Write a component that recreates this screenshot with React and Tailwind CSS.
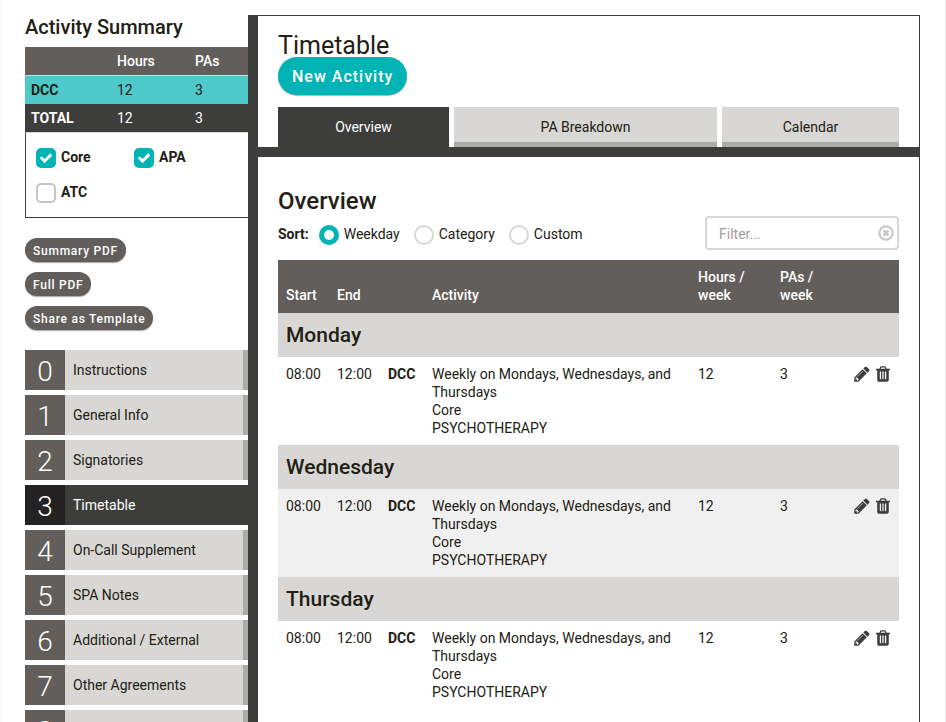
import React, { useState } from "react";

function Glyph({ d, className }) {
  return (
    <svg viewBox="0 0 1792 1792" fill="currentColor" aria-hidden="true" className={className}>
      <path d={d} />
    </svg>
  );
}

const CHECK =
  "M1671 566q0 40-28 68l-724 724-136 136q-28 28-68 28t-68-28l-136-136-362-362q-28-28-28-68t28-68l136-136q28-28 68-28t68 28l294 295 656-657q28-28 68-28t68 28l136 136q28 28 28 68z";
const PENCIL =
  "M491 1536l91-91-235-235-91 91v107h128v128h107zm523-928q0-22-22-22-10 0-17 7l-542 542q-7 7-7 17 0 22 22 22 10 0 17-7l542-542q7-7 7-17zm-54-192l416 416-832 832h-416v-416zm683 96q0 53-37 90l-166 166-416-416 166-165q36-38 90-38 53 0 91 38l235 234q37 39 37 91z";
const TRASH =
  "M704 1376v-704q0-14-9-23t-23-9h-64q-14 0-23 9t-9 23v704q0 14 9 23t23 9h64q14 0 23-9t9-23zm256 0v-704q0-14-9-23t-23-9h-64q-14 0-23 9t-9 23v704q0 14 9 23t23 9h64q14 0 23-9t9-23zm256 0v-704q0-14-9-23t-23-9h-64q-14 0-23 9t-9 23v704q0 14 9 23t23 9h64q14 0 23-9t9-23zm-544-992h448l-48-117q-7-9-17-11h-317q-10 2-17 11zm928 32v64q0 14-9 23t-23 9h-96v948q0 83-47 143.5t-113 60.5h-832q-66 0-113-58.5t-47-141.5v-952h-96q-14 0-23-9t-9-23v-64q0-14 9-23t23-9h309l70-167q15-37 54-63t79-26h320q40 0 79 26t54 63l70 167h309q14 0 23 9t9 23z";
const CLEAR =
  "M1225 1079l-146 146q-10 10-23 10t-23-10l-137-137-137 137q-10 10-23 10t-23-10l-146-146q-10-10-10-23t10-23l137-137-137-137q-10-10-10-23t10-23l146-146q10-10 23-10t23 10l137 137 137-137q10-10 23-10t23 10l146 146q10 10 10 23t-10 23l-137 137 137 137q10 10 10 23t-10 23zm215-183q0-148-73-273t-198-198-273-73-273 73-198 198-73 273 73 273 198 198 273 73 273-73 198-198 73-273zm224 0q0 209-103 385.5t-279.5 279.5-385.5 103-385.5-103-279.5-279.5-103-385.5 103-385.5 279.5-279.5 385.5-103 385.5 103 279.5 279.5 103 385.5z";

const NAV = [
  "Instructions",
  "General Info",
  "Signatories",
  "Timetable",
  "On-Call Supplement",
  "SPA Notes",
  "Additional / External",
  "Other Agreements",
  "",
];

const DAYS = ["Monday", "Wednesday", "Thursday"];

function CheckField({ label, initial }) {
  const [on, setOn] = useState(initial);
  return (
    <label className="flex h-5 items-start gap-[5px] font-bold">
      <span className="grid size-5 place-items-center">
        <input
          type="checkbox"
          checked={on}
          onChange={(e) => setOn(e.target.checked)}
          className="col-start-1 row-start-1 size-5 appearance-none rounded-[5px] border-2 border-[#c8c4c1] bg-white checked:border-[#00b3b4] checked:bg-[#00b3b4]"
        />
        {on && (
          <Glyph d={CHECK} className="pointer-events-none col-start-1 row-start-1 size-[14px] text-white" />
        )}
      </span>
      {label}
    </label>
  );
}

function Pill({ children }) {
  return (
    <button
      type="button"
      className="h-6 rounded-full bg-[#625e5b] px-2 pt-[2px] text-xs font-medium tracking-[0.0625em] text-white shadow-[0_1px_1px_rgba(0,0,0,0.35)]"
    >
      {children}
    </button>
  );
}

function Summary() {
  return (
    <section>
      <h2 className="mb-2 text-xl leading-6 font-medium">Activity Summary</h2>
      <table className="w-full table-fixed border-collapse text-left">
        <colgroup>
          <col className="w-[86px]" />
          <col className="w-[78px]" />
          <col />
        </colgroup>
        <thead className="bg-[#625e5b] text-white">
          <tr className="h-7">
            <th className="px-[6px]"></th>
            <th className="px-[6px] font-medium">Hours</th>
            <th className="px-[6px] font-medium">PAs</th>
          </tr>
        </thead>
        <tbody>
          <tr className="h-[29px] border-t border-[#d8d7d5] bg-[#4ec9ca]">
            <th className="px-[6px] font-bold">DCC</th>
            <td className="px-[6px]">12</td>
            <td className="px-[6px]">3</td>
          </tr>
          <tr className="h-7 bg-[#3d3d3b] text-white">
            <th className="px-[6px] font-bold">TOTAL</th>
            <td className="px-[6px]">12</td>
            <td className="px-[6px]">3</td>
          </tr>
        </tbody>
      </table>
      <div className="grid grid-cols-[98px_1fr] gap-y-[15px] border-t border-b border-l border-t-[#d8d7d5] border-b-[#3d3d3b] border-l-[#3d3d3b] px-[10px] pt-[15px] pb-[14px]">
        <CheckField label="Core" initial={true} />
        <CheckField label="APA" initial={true} />
        <CheckField label="ATC" initial={false} />
      </div>
    </section>
  );
}

function SideNav() {
  return (
    <nav className="mt-5 flex flex-col gap-[5px]">
      {NAV.map((label, i) => {
        const active = label === "Timetable";
        return (
          <a
            key={i}
            href={"#section-" + i}
            className={
              "flex h-10 items-center " +
              (active ? "bg-[#3d3d3b] text-white" : "border-r-[5px] border-[#ababaa] bg-[#d8d7d5]")
            }
          >
            <span
              className={
                "flex h-10 w-10 items-center justify-center pt-1 text-[28px] leading-8 font-light text-white " +
                (active ? "bg-[#242223]" : "bg-[#625e5b]")
              }
            >
              {i}
            </span>
            <span className="px-2">{label}</span>
          </a>
        );
      })}
    </nav>
  );
}

function Tab({ children, active }) {
  return (
    <button
      type="button"
      role="tab"
      aria-selected={active}
      className={
        "h-10 border-b-[5px] pt-[5px] " +
        (active ? "border-[#3d3d3b] bg-[#3d3d3b] text-white" : "border-[#ababaa] bg-[#d8d7d5]")
      }
    >
      {children}
    </button>
  );
}

function SortOption({ value, sort, setSort }) {
  return (
    <label className="flex h-5 items-start gap-[5px]">
      <input
        type="radio"
        name="sort"
        checked={sort === value}
        onChange={() => setSort(value)}
        className="size-5 appearance-none rounded-full border-2 border-[#d8d7d5] bg-white checked:border-[5px] checked:border-[#00b3b4]"
      />
      {value}
    </label>
  );
}

function DayGroup({ day, shaded }) {
  return (
    <tbody>
      <tr className="h-11 bg-[#d8d7d5]">
        <th colSpan={7} scope="colgroup" className="px-2 text-[21px] leading-7 font-medium">
          {day}
        </th>
      </tr>
      <tr className={"align-top " + (shaded ? "bg-[#f0f0f0]" : "bg-white")}>
        <td className="p-2">08:00</td>
        <td className="p-2">12:00</td>
        <td className="p-2 font-bold">DCC</td>
        <td className="p-2">
          Weekly on Mondays, Wednesdays, and Thursdays
          <br />
          Core
          <br />
          PSYCHOTHERAPY
        </td>
        <td className="p-2">12</td>
        <td className="p-2">3</td>
        <td className="py-2 pr-[7px]">
          <div className="flex justify-end gap-[3px] text-[#3d3d3b]">
            <button type="button" aria-label="Edit">
              <Glyph d={PENCIL} className="size-[18px]" />
            </button>
            <button type="button" aria-label="Delete">
              <Glyph d={TRASH} className="size-[18px]" />
            </button>
          </div>
        </td>
      </tr>
    </tbody>
  );
}

export default function App() {
  const [sort, setSort] = useState("Weekday");
  const [filter, setFilter] = useState("");
  return (
    <div className="flex h-screen overflow-hidden border-r border-l border-r-[#e5e5e5] border-l-[#f7f7f7] bg-white pt-[15px] pr-[25px] pl-6 font-[Roboto,sans-serif] text-sm leading-[18px] text-[#222013]">
      <aside className="w-[223px] shrink-0">
        <Summary />
        <div className="mt-5 flex flex-col items-start gap-[10px]">
          <Pill>Summary PDF</Pill>
          <Pill>Full PDF</Pill>
          <Pill>Share as Template</Pill>
        </div>
        <SideNav />
      </aside>

      <main className="min-w-0 flex-1 border-t border-r border-l-[10px] border-[#3d3d3b]">
        <header className="border-b-[10px] border-[#3d3d3b] px-5 pt-[18px]">
          <h1 className="text-[25px] leading-[23px]">Timetable</h1>
          <button
            type="button"
            className="block h-[38px] rounded-full bg-[#00b3b4] px-[14px] pt-[2px] text-base font-medium tracking-[0.0625em] text-white shadow-[0_1px_1px_rgba(0,0,0,0.3)]"
          >
            New Activity
          </button>
          <div role="tablist" className="mt-3 grid grid-cols-[171fr_263fr_177fr] gap-[5px]">
            <Tab active={true}>Overview</Tab>
            <Tab active={false}>PA Breakdown</Tab>
            <Tab active={false}>Calendar</Tab>
          </div>
        </header>

        <section className="px-5 pt-[30px]">
          <h2 className="text-2xl leading-[29px] font-medium">Overview</h2>
          <div className="flex items-center justify-between">
            <div role="radiogroup" aria-label="Sort" className="flex items-start pt-1">
              <span className="mr-[10px] font-bold">Sort:</span>
              <div className="flex gap-[14px]">
                <SortOption value="Weekday" sort={sort} setSort={setSort} />
                <SortOption value="Category" sort={sort} setSort={setSort} />
                <SortOption value="Custom" sort={sort} setSort={setSort} />
              </div>
            </div>
            <div className="flex h-[34px] w-[194px] items-center rounded-[4px] border-2 border-[#d8d7d5] pr-[2px] pl-3">
              <input
                type="text"
                aria-label="Filter"
                placeholder="Filter..."
                value={filter}
                onChange={(e) => setFilter(e.target.value)}
                className="min-w-0 flex-1 pt-[2px] outline-none placeholder:text-[#a09e9c]"
              />
              <button type="button" aria-label="Clear filter" onClick={() => setFilter("")}>
                <Glyph d={CLEAR} className="size-[18px] text-[#c9c9c9]" />
              </button>
            </div>
          </div>

          <table className="mt-[10px] w-full table-fixed border-collapse text-left">
            <colgroup>
              <col className="w-[51px]" />
              <col className="w-[51px]" />
              <col className="w-[44px]" />
              <col />
              <col className="w-[82px]" />
              <col className="w-[66px]" />
              <col className="w-[61px]" />
            </colgroup>
            <thead className="bg-[#625e5b] text-white">
              <tr className="h-[53px] align-bottom">
                <th className="px-2 pb-[9px] font-medium">Start</th>
                <th className="px-2 pb-[9px] font-medium">End</th>
                <th className="px-2 pb-[9px]"></th>
                <th className="px-2 pb-[9px] font-medium">Activity</th>
                <th className="px-2 pb-[9px] font-medium">
                  Hours /<br />
                  week
                </th>
                <th className="px-2 pb-[9px] font-medium">
                  PAs /<br />
                  week
                </th>
                <th className="px-2 pb-[9px]"></th>
              </tr>
            </thead>
            {DAYS.map((day, i) => (
              <DayGroup key={day} day={day} shaded={i % 2 === 1} />
            ))}
          </table>
        </section>
      </main>
    </div>
  );
}
